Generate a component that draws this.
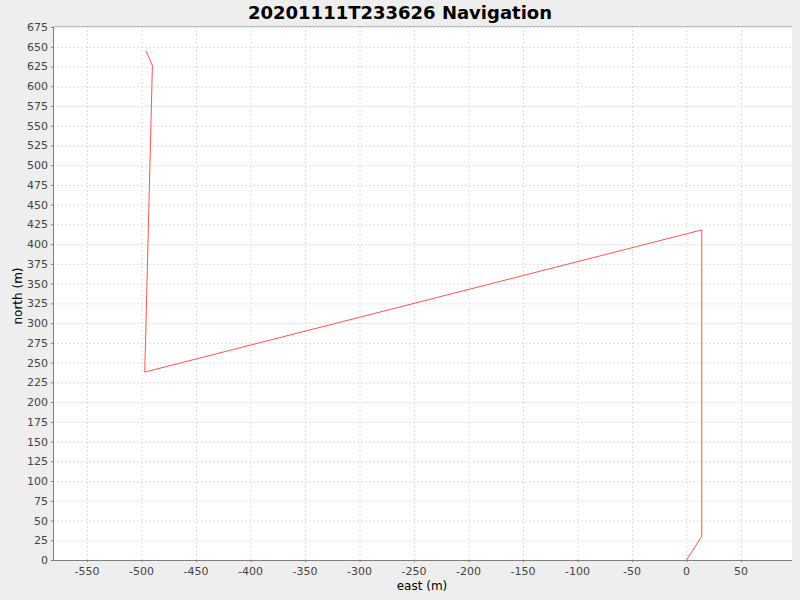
import React from "react";

const L = 53, R = 792, T = 26, B = 560;
const xs = (v: number) => 686.5 + v * 1.09;
const ys = (v: number) => 560 - v * (533 / 675);

export default function App() {
  const yt = Array.from({ length: 28 }, (_, i) => i * 25);
  const xt = Array.from({ length: 13 }, (_, i) => -550 + i * 50);
  const pts: [number, number][] = [[0, 0], [14, 30], [14, 418], [-497, 238], [-490, 626], [-496, 645]];
  return (
    <div className="w-[800px] h-[600px] bg-[#eeeeee]" style={{ fontFamily: '"DejaVu Sans", sans-serif' }}>
      <svg width="800" height="600" className="block">
        <text x="400" y="19" textAnchor="middle" fontSize="18" fontWeight="bold" fill="#000">20201111T233626 Navigation</text>
        <rect x={L} y={T} width={R - L} height={B - T} fill="#fff" />
        {yt.map((v) => (
          <g key={v}>
            <line x1={L} x2={R} y1={ys(v) + 0.5} y2={ys(v) + 0.5} stroke="#dddddd" strokeDasharray="2 2" />
            <line x1={L - 2} x2={L} y1={ys(v) + 0.5} y2={ys(v) + 0.5} stroke="#808080" />
            <text x={L - 5} y={ys(v) + 4} textAnchor="end" fontSize="11" fill="#444">{v}</text>
          </g>
        ))}
        {xt.map((v) => (
          <g key={v}>
            <line x1={xs(v) + 0.5} x2={xs(v) + 0.5} y1={T} y2={B} stroke="#dddddd" strokeDasharray="2 2" />
            <line x1={xs(v) + 0.5} x2={xs(v) + 0.5} y1={B} y2={B + 2} stroke="#808080" />
            <text x={xs(v)} y={B + 15} textAnchor="middle" fontSize="11" fill="#444">{v}</text>
          </g>
        ))}
        <line x1={L + 0.5} x2={L + 0.5} y1={T} y2={B} stroke="#808080" />
        <line x1={L} x2={R} y1={B + 0.5} y2={B + 0.5} stroke="#808080" />
        <line x1={L} x2={R} y1={T + 0.5} y2={T + 0.5} stroke="#bbbbbb" />
        <polyline points={pts.map(([x, y]) => `${xs(x)},${ys(y)}`).join(" ")} fill="none" stroke="#ff5555" strokeWidth="1" />
        <text x="422" y="590" textAnchor="middle" fontSize="12" fill="#000">east (m)</text>
        <text x="22" y="296" textAnchor="middle" fontSize="12" fill="#000" transform="rotate(-90 22 296)">north (m)</text>
      </svg>
    </div>
  );
}
